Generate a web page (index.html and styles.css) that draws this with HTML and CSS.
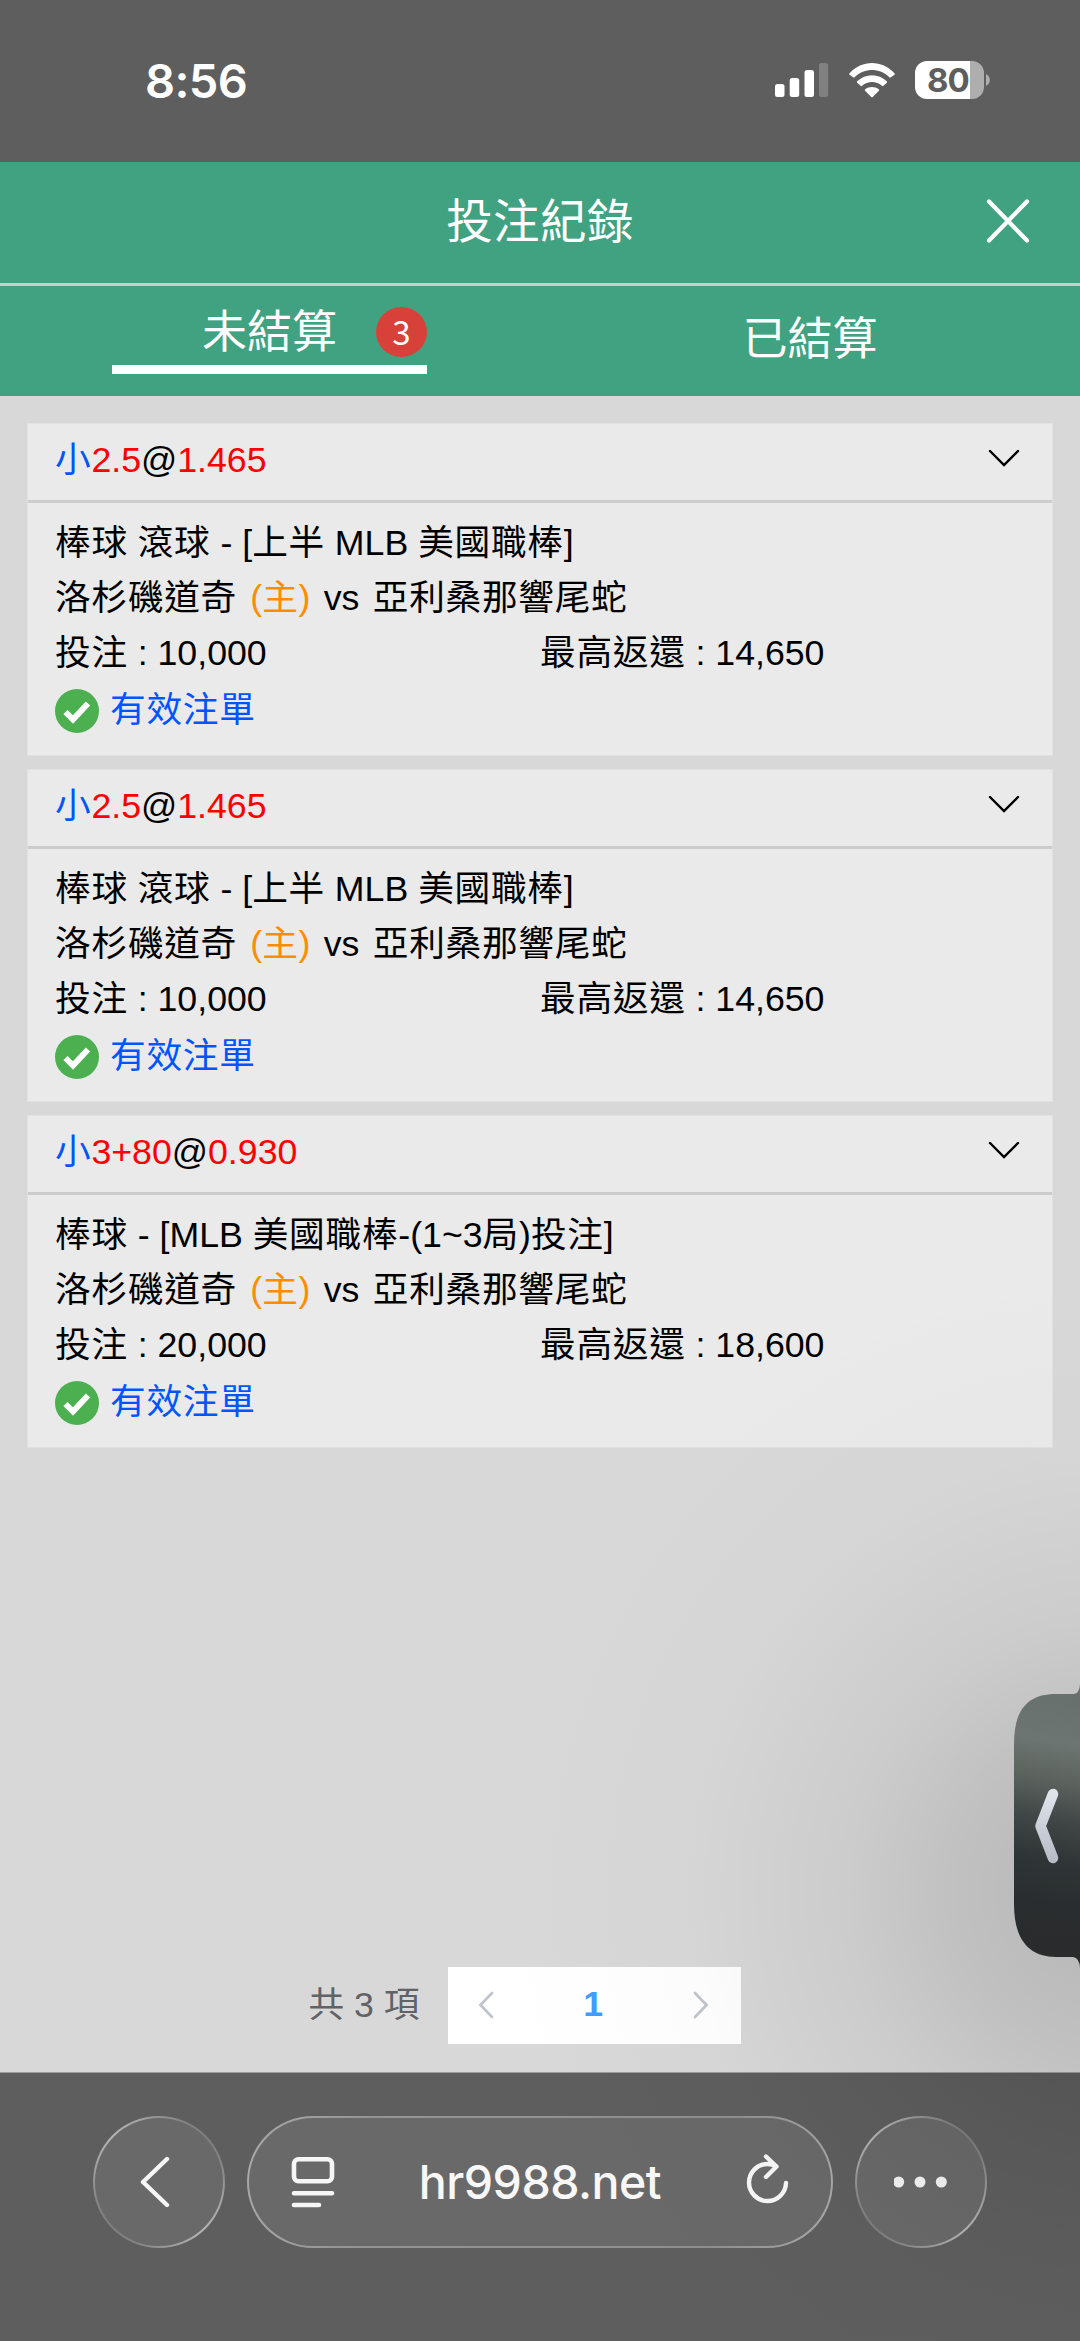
FILE: index.html
```
<!DOCTYPE html>
<html lang="zh-Hant">
<head>
<meta charset="utf-8">
<meta name="viewport" content="width=1080">
<title>投注紀錄</title>
<link rel="stylesheet" href="styles.css">
</head>
<body>
<div class="screen">
  <header class="status-bar">
    <time class="clock">8:56</time>
    <div class="status-icons">
      <svg class="signal" width="54" height="38" viewBox="0 0 54 38" fill="#fff"><rect x="0" y="23" width="9.5" height="13" rx="2.5"/><rect x="14.7" y="17" width="9.5" height="19" rx="2.5"/><rect x="29.5" y="9" width="9.5" height="27" rx="2.5"/><rect x="44" y="2" width="9.2" height="34" rx="2.5" opacity=".22"/></svg>
      <svg class="wifi" width="46" height="38" viewBox="0 0 46 38" fill="#fff"><path d="M.6 12.2C13-1.3 33-1.3 45.4 12.2a1 1 0 0 1 0 1.5L42 16.3a1.2 1.2 0 0 1-1.6-.1C30.600 6.600 15.400 6.600 5.600 16.200a1.200 1.200 0 0 1-1.600.1L.6 13.700a1 1 0 0 1 0-1.500z"/><path d="M8.200 20.300c8.200-8 21.400-8 29.600 0a1 1 0 0 1 0 1.500l-3.300 3a1.200 1.200 0 0 1-1.600 0c-5.500-5-14.300-5-19.800 0a1.200 1.200 0 0 1-1.600 0l-3.300-3a1 1 0 0 1 0-1.500z"/><path d="M16.200 28.300c3.900-3.100 9.700-3.100 13.600 0a1 1 0 0 1 .1 1.500l-6.100 6.100a1.100 1.100 0 0 1-1.600 0l-6.100-6.100a1 1 0 0 1 .1-1.500z"/></svg>
      <div class="battery"><span class="battery-body">80</span><svg width="4" height="12" viewBox="0 0 4 12"><path d="M0 0C5 2.500 5 9.500 0 12z" fill="#aeaeae"/></svg></div>
    </div>
  </header>

  <div class="title-bar">
    <h1 class="title">投注紀錄</h1>
    <button class="close" aria-label="關閉"><svg width="44" height="44" viewBox="0 0 44 44"><path d="M3 2.500 41 41.500M41 2.500 3 41.500" fill="none" stroke="#fff" stroke-width="4.200" stroke-linecap="round"/></svg></button>
  </div>

  <nav class="tabs">
    <div class="tab tab-active"><div class="tab-inner"><span class="tab-label">未結算</span><span class="count">3</span></div></div>
    <div class="tab"><span class="tab-label">已結算</span></div>
  </nav>

  <main class="content">
    <section class="card">
      <div class="card-head"><p><span class="blue zh">小</span><span class="red">2.5</span>@<span class="red">1.465</span></p><svg class="chevron" width="32" height="18" viewBox="0 0 32 18"><path d="M2 2 16 16 30 2"/></svg></div>
      <div class="card-body">
        <p><span class="zh">棒球</span> <span class="zh">滾球</span> - [<span class="zh">上半</span> MLB <span class="zh">美國職棒</span>]</p>
        <p class="teams"><span class="zh">洛杉磯道奇</span> <span class="orange">(<span class="zh">主</span>)</span> vs <span class="zh">亞利桑那響尾蛇</span></p>
        <div class="amounts"><span><span class="zh">投注</span> : 10,000</span><span><span class="zh">最高返還</span> : 14,650</span></div>
        <div class="state"><svg width="44" height="44" viewBox="0 0 44 44"><circle cx="22" cy="22" r="22" fill="#4caf50"/><path d="m10.500 23 7.500 7.500L33 14.500" fill="none" stroke="#fff" stroke-width="6"/></svg><span class="zh blue">有效注單</span></div>
      </div>
    </section>
    <section class="card">
      <div class="card-head"><p><span class="blue zh">小</span><span class="red">2.5</span>@<span class="red">1.465</span></p><svg class="chevron" width="32" height="18" viewBox="0 0 32 18"><path d="M2 2 16 16 30 2"/></svg></div>
      <div class="card-body">
        <p><span class="zh">棒球</span> <span class="zh">滾球</span> - [<span class="zh">上半</span> MLB <span class="zh">美國職棒</span>]</p>
        <p class="teams"><span class="zh">洛杉磯道奇</span> <span class="orange">(<span class="zh">主</span>)</span> vs <span class="zh">亞利桑那響尾蛇</span></p>
        <div class="amounts"><span><span class="zh">投注</span> : 10,000</span><span><span class="zh">最高返還</span> : 14,650</span></div>
        <div class="state"><svg width="44" height="44" viewBox="0 0 44 44"><circle cx="22" cy="22" r="22" fill="#4caf50"/><path d="m10.500 23 7.500 7.500L33 14.500" fill="none" stroke="#fff" stroke-width="6"/></svg><span class="zh blue">有效注單</span></div>
      </div>
    </section>
    <section class="card">
      <div class="card-head"><p><span class="blue zh">小</span><span class="red">3+80</span>@<span class="red">0.930</span></p><svg class="chevron" width="32" height="18" viewBox="0 0 32 18"><path d="M2 2 16 16 30 2"/></svg></div>
      <div class="card-body">
        <p><span class="zh">棒球</span> - [MLB <span class="zh">美國職棒</span>-(1~3<span class="zh">局</span>)<span class="zh">投注</span>]</p>
        <p class="teams"><span class="zh">洛杉磯道奇</span> <span class="orange">(<span class="zh">主</span>)</span> vs <span class="zh">亞利桑那響尾蛇</span></p>
        <div class="amounts"><span><span class="zh">投注</span> : 20,000</span><span><span class="zh">最高返還</span> : 18,600</span></div>
        <div class="state"><svg width="44" height="44" viewBox="0 0 44 44"><circle cx="22" cy="22" r="22" fill="#4caf50"/><path d="m10.500 23 7.500 7.500L33 14.500" fill="none" stroke="#fff" stroke-width="6"/></svg><span class="zh blue">有效注單</span></div>
      </div>
    </section>

    <div class="pagination">
      <span class="total">共 3 項</span>
      <div class="pager">
        <svg width="16" height="28" viewBox="0 0 16 28"><path d="M14 2 2.500 14 14 26"/></svg>
        <b class="page">1</b>
        <svg width="16" height="28" viewBox="0 0 16 28"><path d="M2 2 13.500 14 2 26"/></svg>
      </div>
    </div>
  </main>

  <footer class="browser-bar">
    <button class="glass round" aria-label="返回"><svg width="30" height="52" viewBox="0 0 30 52"><path d="M27 3 3 26 27 49" fill="none" stroke="#f6f6f6" stroke-width="4.400" stroke-linecap="round" stroke-linejoin="round"/></svg></button>
    <div class="glass address">
      <svg width="44" height="52" viewBox="0 0 44 52" fill="none" stroke="#f6f6f6" stroke-width="4.600" stroke-linecap="round"><rect x="3" y="3.200" width="38" height="22" rx="4.500"/><path d="M3 37.200h38M3 49h25"/></svg>
      <span class="url">hr9988.net</span>
      <svg class="reload" width="44" height="54" viewBox="0 0 44 54" fill="none" stroke="#f6f6f6" stroke-width="4.400" stroke-linecap="round" stroke-linejoin="round"><path d="M31 13.200C28 11.600 25 11 22.500 11A18.500 18.500 0 1 0 41 30M21 3.500l10.500 10L21 24"/></svg>
    </div>
    <button class="glass round" aria-label="更多"><svg width="54" height="12" viewBox="0 0 54 12" fill="#f3f3f3"><circle cx="4.700" cy="6" r="5.500"/><circle cx="26" cy="6" r="5.500"/><circle cx="47.300" cy="6" r="5.500"/></svg></button>
  </footer>

  <div class="edge-shade"></div>
  <svg class="drawer-handle" width="66" height="284" viewBox="0 0 66 284">
    <defs>
      <linearGradient id="handle" x1="0" y1="0" x2="-.04" y2="1"><stop offset="0" stop-color="#68706d"/><stop offset=".18" stop-color="#6d7572"/><stop offset=".31" stop-color="#5c635f"/><stop offset=".45" stop-color="#414746"/><stop offset=".6" stop-color="#2f3536"/><stop offset=".75" stop-color="#292d2f"/><stop offset=".88" stop-color="#2a2b2c"/><stop offset="1" stop-color="#2c2c2c"/></linearGradient>
      <linearGradient id="arrow" x1="0" y1="0" x2="0" y2="1"><stop offset="0" stop-color="#dfe3eb"/><stop offset="1" stop-color="#b8bdc8"/></linearGradient>
    </defs>
    <path d="M66 0Q65.500 10 59 10H42C16 10 0 23 0 60V220C0 257 16 273 42 273H59Q65.500 274 66 284Z" fill="url(#handle)"/>
    <path d="M39 110 26.500 142 39 174" fill="none" stroke="url(#arrow)" stroke-width="10.500" stroke-linecap="round" stroke-linejoin="round"/>
  </svg>
</div>
</body>
</html>
```
FILE: styles.css
```
* { box-sizing: border-box; }

body {
  margin: 0;
  background: #5e5e5e;
  color: #000;
  font: 35.7px/55px "Liberation Sans", "Noto Sans CJK TC", sans-serif;
}

h1, p { margin: 0; font-weight: 400; }
svg { display: block; flex: none; }
button { padding: 0; border: 0; background: none; }

.screen {
  position: relative;
  display: flex;
  flex-direction: column;
  width: 1080px;
  height: 2341px;
  overflow: hidden;
}

/* Phone status bar */
.status-bar {
  display: flex;
  justify-content: space-between;
  align-items: center;
  height: 162px;
  padding: 0 90px 2px 145px;
  background: #5e5e5e;
  color: #fff;
  font-family: Inter, sans-serif;
}
.clock { font-size: 47px; font-weight: 600; letter-spacing: -.6px; }
.status-icons { display: flex; align-items: center; }
.wifi { margin: 0 20px 0 20px; }
.battery { display: flex; align-items: center; gap: 2px; }
.battery-body {
  width: 69px;
  height: 38px;
  border-radius: 12px;
  background: linear-gradient(90deg, #fff 55px, #aeaeae 55px);
  color: #5e5e5e;
  font-size: 33px;
  font-weight: 700;
  line-height: 38px;
  padding-left: 12px;
  letter-spacing: -1px;
}

/* Title and tabs */
.title-bar {
  display: grid;
  grid-template-columns: 1fr auto 1fr;
  align-items: center;
  height: 124px;
  padding: 0 50px 3px;
  border-bottom: 3px solid #c7cecb;
  background: #40a281;
}
.title { grid-column: 2; padding-top: 3px; color: #fff; font-size: 46.500px; letter-spacing: .4px; }
.close { justify-self: end; }
.tabs {
  display: grid;
  grid-template-columns: 1fr 1fr;
  height: 109.500px;
  flex: none;
  background: #40a281;
  color: #fff;
  font-size: 45px;
}
.tab { display: flex; justify-content: center; align-items: center; padding-bottom: 3px; }
.tab-active { align-items: flex-start; padding: 18px 0 0; }
.tab-inner {
  display: flex;
  justify-content: flex-end;
  align-items: center;
  gap: 39px;
  width: 315px;
  height: 70px;
  margin-right: 1px;
  padding-bottom: 5px;
  border-bottom: 9px solid #fff;
}
.count {
  width: 51px;
  height: 50px;
  border-radius: 50%;
  background: #d8413a;
  font: 33px/48px "Noto Sans CJK TC", sans-serif;
  text-align: center;
}

/* Bet list */
.content {
  display: flex;
  flex-direction: column;
  gap: 13px;
  flex: 1;
  padding: 27.500px 27px 27.500px;
  background: #d8d8d8;
}
.card { height: 333px; border: 1px solid #e1e1e1; background: #eaeaea; }
.card-head {
  display: flex;
  justify-content: space-between;
  align-items: center;
  height: 79px;
  padding: 0 32px 4px 27px;
  border-bottom: 3px solid #ccc;
}
.chevron { margin-bottom: 4px; fill: none; stroke: #000; stroke-width: 2.400; stroke-linecap: round; }
.card-body { padding: 13px 27px 0; }
.teams { word-spacing: 3.4px; }
.amounts { display: grid; grid-template-columns: 1fr 1fr; }
.state { display: flex; align-items: center; gap: 11px; height: 59px; }
.zh { letter-spacing: .7px; }
.blue { color: #0055ff; }
.red { color: #f00; }
.orange { color: #ff8c00; }

.pagination {
  display: flex;
  align-items: center;
  gap: 28px;
  margin: auto 0 0 281.500px;
  color: #606266;
}
.pager {
  display: flex;
  justify-content: space-between;
  align-items: center;
  width: 293px;
  height: 77px;
  padding: 0 32px 2px 30px;
  background: #fff;
  fill: none;
  stroke: #c0c4cc;
  stroke-width: 2.700;
}
.pager path { stroke-linecap: round; }
.page { color: #409eff; stroke: none; }

/* Browser toolbar */
.browser-bar {
  display: flex;
  align-items: flex-start;
  gap: 22px;
  height: 269.500px;
  flex: none;
  padding: 43px 93px 0;
  border-top: 1px solid #9c9c9c;
  background: #5e5e5e;
}
.glass {
  display: flex;
  align-items: center;
  justify-content: center;
  height: 132px;
  border: 2px solid transparent;
  border-radius: 66px;
  background:
    linear-gradient(#696969, #696969) padding-box,
    linear-gradient(45deg, #7c7c7c 14%, #a6a6a6 35%, #b4b4b4 50%, #a6a6a6 65%, #7c7c7c 86%) border-box;
}
.round { width: 132px; flex: none; }
.round:first-child { padding-right: 8px; }
.address {
  flex: 1;
  justify-content: space-between;
  padding: 0 42px;
  background:
    linear-gradient(#696969, #696969) padding-box,
    linear-gradient(100deg, #aaa, #949494 20%, #8f8f8f 80%, #aaa) border-box;
}
.reload { margin-bottom: 3px; }
.url { color: #f8f8f8; font: 500 46.500px/60px Inter, sans-serif; letter-spacing: -.5px; }

/* Drawer handle floating over the right edge */
.edge-shade {
  position: absolute;
  inset: 162px 0 0;
  background: radial-gradient(ellipse 620px 640px at 1110px 1730px, rgba(0,0,0,.16), rgba(0,0,0,.11) 25%, rgba(0,0,0,.055) 43%, rgba(0,0,0,.013) 68%, transparent);
  pointer-events: none;
}
.drawer-handle { position: absolute; right: 0; top: 1683.500px; }
```
